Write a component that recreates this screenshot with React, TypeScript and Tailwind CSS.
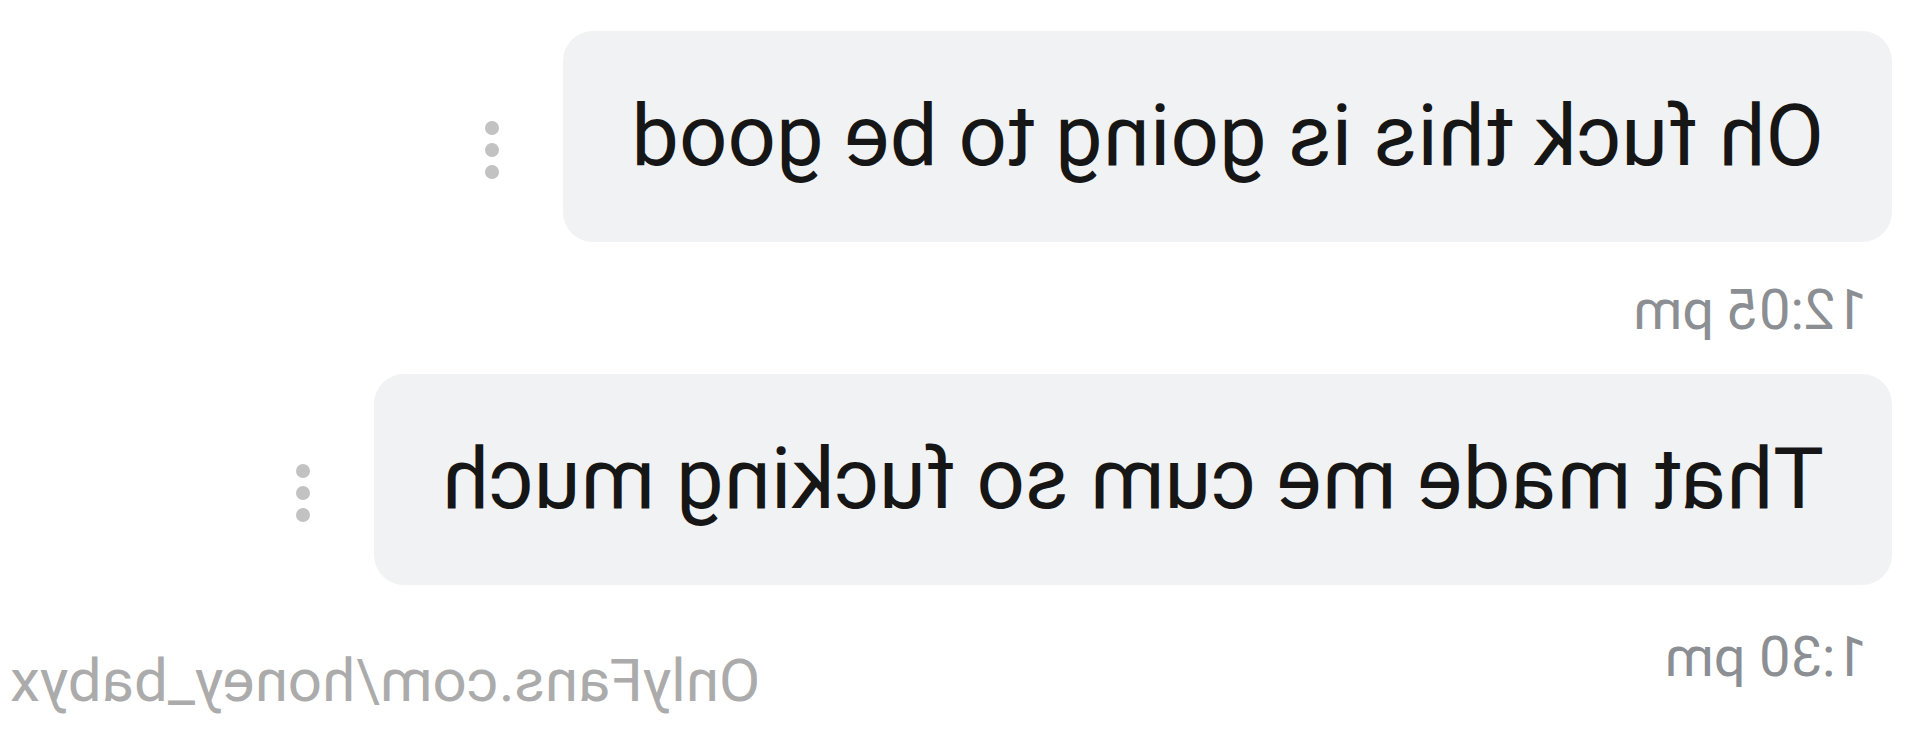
import React from "react";

const messages = [
  { text: "Oh fuck this is going to be good", time: "12:05 pm", gap: "mt-[40px]" },
  { text: "That made me cum so fucking much", time: "1:30 pm", gap: "mt-[44px]" },
];

const Dots = () => (
  <div className="flex flex-col gap-[8px] mt-[26px] ml-[64px]">
    <div className="w-[14px] h-[14px] rounded-full bg-[#c2c2c2]"></div>
    <div className="w-[14px] h-[14px] rounded-full bg-[#c2c2c2]"></div>
    <div className="w-[14px] h-[14px] rounded-full bg-[#c2c2c2]"></div>
  </div>
);

const App = () => {
  return (
    <div
      className="relative w-[1920px] h-[731px] overflow-hidden bg-white -scale-x-100"
      style={{ fontFamily: "Roboto, 'Liberation Sans', sans-serif" }}
    >
      <div className="flex flex-col pl-[28px] pt-[31px]">
        {messages.map((m, i) => (
          <div key={i} className={i === 0 ? "" : "mt-[36px]"}>
            <div className="flex items-center">
              <div className="h-[211px] flex items-center px-[68px] rounded-[30px] bg-[#f1f2f4] text-[85px] leading-none text-[#161616] whitespace-nowrap">
                {m.text}
              </div>
              <Dots />
            </div>
            <div className={`ml-[25px] ${m.gap} text-[56px] leading-none text-[#8b8e92]`}>
              {m.time}
            </div>
          </div>
        ))}
      </div>
      <div className="absolute right-[10px] top-[651px] text-[60px] leading-none text-[#ababab] whitespace-nowrap">
        OnlyFans.com/honey_babyx
      </div>
    </div>
  );
};

export default App;
